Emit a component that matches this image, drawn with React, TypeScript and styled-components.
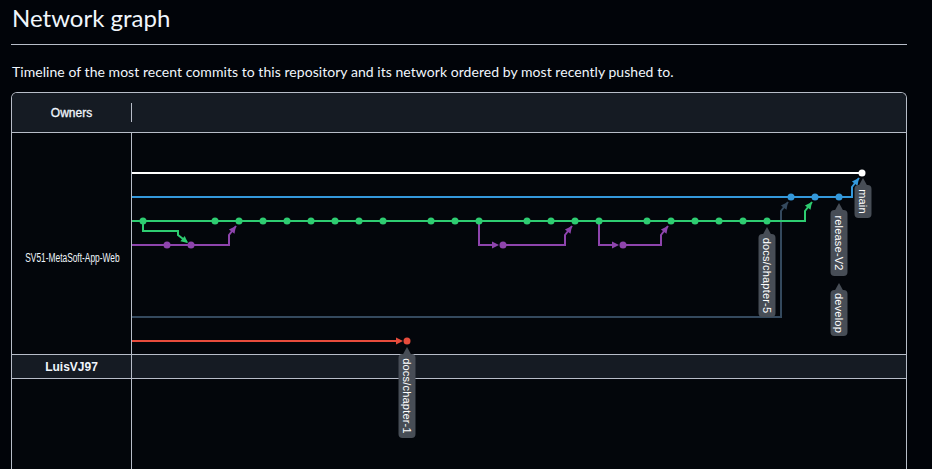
import styled, { createGlobalStyle } from "styled-components";

const GlobalStyle = createGlobalStyle`
  html, body {
    margin: 0;
    padding: 0;
    background: #010409;
    overflow: hidden;
  }
  body {
    font-family: Lato, "Noto Sans", "Liberation Sans", sans-serif;
    color: #f0f6fc;
  }
`;

const Page = styled.main`
  width: 896px;
  padding-left: 11px;
`;

const Title = styled.h2`
  margin: 0;
  padding: 0 0 8px 1px;
  font-size: 24px;
  font-weight: 400;
  line-height: 36px;
  border-bottom: 1px solid #b7bdc8;
`;

const Lead = styled.p`
  margin: 16px 0 10px 1px;
  font-size: 14px;
  line-height: 21px;
  letter-spacing: 0.05px;
`;

const Frame = styled.section`
  border: 1px solid #b7bdc8;
  border-bottom: none;
  border-radius: 6px 6px 0 0;
  overflow: hidden;
`;

const Header = styled.div`
  display: grid;
  grid-template-columns: 119px 1px 1fr;
  align-items: center;
  height: 39px;
  background: #151b23;
  border-bottom: 1px solid #b7bdc8;
`;

const HeadLabel = styled.div`
  text-align: center;
  font: 400 12px "Liberation Sans", Arial, sans-serif;
  -webkit-text-stroke: 0.3px #f0f6fc;
  color: #f0f6fc;
`;

const HeadDivider = styled.span`
  height: 19px;
  background: #b7bdc8;
`;

const Body = styled.div`
  position: relative;
  background: #03060b;
`;

const Row = styled.div<{ $h: number; $band?: boolean }>`
  display: grid;
  grid-template-columns: 120px 1fr;
  height: ${({ $h }) => $h}px;
  box-sizing: border-box;
  background: ${({ $band }) => ($band ? "#151b23" : "transparent")};
  border-top: ${({ $band }) => ($band ? "1px solid #b7bdc8" : "none")};
  border-bottom: ${({ $band }) => ($band ? "1px solid #b7bdc8" : "none")};
`;

const OwnerCell = styled.div<{ $offset?: number }>`
  display: flex;
  align-items: center;
  justify-content: center;
  box-sizing: border-box;
  padding-top: ${({ $offset }) => $offset ?? 0}px;
  border-right: 1px solid #b7bdc8;
`;

const RepoName = styled.span`
  display: inline-block;
  white-space: nowrap;
  font: 400 12.5px "Liberation Sans", Arial, sans-serif;
  color: #f0f6fc;
  transform: translateX(1px) scaleX(0.67);
`;

const OwnerName = styled.span`
  font: 700 12px "Liberation Sans", Arial, sans-serif;
  color: #f0f6fc;
`;

const Chart = styled.svg`
  position: absolute;
  left: 0;
  top: 0;
  width: 100%;
  height: 100%;
  pointer-events: none;
`;

const TagText = styled.text`
  font: 400 11px "Liberation Sans", Arial, sans-serif;
  letter-spacing: 0.2px;
  fill: #ffffff;
`;

const C = {
  white: "#ffffff",
  blue: "#3498db",
  green: "#2ecc71",
  purple: "#8e44ad",
  slate: "#34495e",
  red: "#e74c3c",
};

type Edge = { color: string; d: string; tip?: [number, number, number, number] };

// merge into a commit above: vertical at x-10, then diagonal into the dot
const mergeUp = (fromX: number, fromY: number, tx: number, ty: number) =>
  `M${fromX} ${fromY} H${tx - 10} V${ty + 14} L${tx - 3} ${ty + 5}`;

const edges: Edge[] = [
  { color: C.white, d: "M132 173 H862" },
  { color: C.slate, d: mergeUp(132, 317, 791, 197), tip: [788, 202, 7, -9] },
  { color: C.blue, d: mergeUp(132, 197, 862, 173), tip: [859, 178, 7, -9] },
  { color: C.green, d: mergeUp(132, 221, 815, 197), tip: [812, 202, 7, -9] },
  { color: C.green, d: "M143 221 V231 H178 V235 L187 242", tip: [188, 243, 10, 8] },
  { color: C.purple, d: mergeUp(132, 245, 239, 221), tip: [236, 226, 7, -9] },
  { color: C.purple, d: "M479 221 V245 H497", tip: [499, 245, 1, 0] },
  { color: C.purple, d: mergeUp(503, 245, 575, 221), tip: [572, 226, 7, -9] },
  { color: C.purple, d: "M599 221 V245 H617", tip: [619, 245, 1, 0] },
  { color: C.purple, d: mergeUp(623, 245, 671, 221), tip: [668, 226, 7, -9] },
  { color: C.red, d: "M132 341 H401", tip: [403, 341, 1, 0] },
];

const greenDots = [143, 215, 239, 263, 287, 311, 335, 359, 383, 431, 455, 479, 527, 551, 575, 599, 647, 671, 695, 719, 743, 767];

const dots: { x: number; y: number; color: string }[] = [
  ...greenDots.map((x) => ({ x, y: 221, color: C.green })),
  ...[167, 191, 503, 623].map((x) => ({ x, y: 245, color: C.purple })),
  ...[791, 815, 839].map((x) => ({ x, y: 197, color: C.blue })),
  { x: 862, y: 173, color: C.white },
  { x: 407, y: 341, color: C.red },
];

const tags = [
  { x: 863, tip: 178, h: 33, text: "main" },
  { x: 839, tip: 203, h: 66, text: "release-V2" },
  { x: 839, tip: 283, h: 46, text: "develop" },
  { x: 767, tip: 227, h: 83, text: "docs/chapter-5" },
  { x: 407, tip: 347, h: 84, text: "docs/chapter-1" },
];

function ArrowHead({ tip, color }: { tip: [number, number, number, number]; color: string }) {
  const [x, y, dx, dy] = tip;
  const len = Math.hypot(dx, dy);
  const ux = dx / len;
  const uy = dy / len;
  const bx = x - ux * 7;
  const by = y - uy * 7;
  const pts = `${x},${y} ${bx - uy * 3.5},${by + ux * 3.5} ${bx + uy * 3.5},${by - ux * 3.5}`;
  return <polygon points={pts} fill={color} />;
}

function Tag({ x, tip, h, text }: { x: number; tip: number; h: number; text: string }) {
  const top = tip + 7;
  return (
    <g>
      <polygon points={`${x},${tip} ${x - 5},${top + 2} ${x + 5},${top + 2}`} fill="#474d56" />
      <rect x={x - 8.5} y={top} width={17} height={h} rx={4} fill="#474d56" />
      <TagText
        transform={`translate(${x} ${top + h / 2}) rotate(90)`}
        textAnchor="middle"
        dominantBaseline="central"
      >
        {text}
      </TagText>
    </g>
  );
}

function NetworkChart() {
  return (
    <Chart>
      <g transform="translate(-12 -133)">
        {edges.map((e, i) => (
          <g key={i}>
            <path d={e.d} fill="none" stroke={e.color} strokeWidth={2} />
            {e.tip && <ArrowHead tip={e.tip} color={e.color} />}
          </g>
        ))}
        {dots.map((d, i) => (
          <circle key={i} cx={d.x} cy={d.y} r={3.5} fill={d.color} />
        ))}
        {tags.map((t) => (
          <Tag key={t.text} {...t} />
        ))}
      </g>
    </Chart>
  );
}

export default function App() {
  return (
    <>
      <GlobalStyle />
      <Page>
        <Title>Network graph</Title>
        <Lead>
          Timeline of the most recent commits to this repository and its network ordered by most recently pushed to.
        </Lead>
        <Frame>
          <Header>
            <HeadLabel>Owners</HeadLabel>
            <HeadDivider />
            <div />
          </Header>
          <Body>
            <Row $h={221}>
              <OwnerCell $offset={28}>
                <RepoName>SV51-MetaSoft-App-Web</RepoName>
              </OwnerCell>
              <div />
            </Row>
            <Row $h={25} $band>
              <OwnerCell>
                <OwnerName>LuisVJ97</OwnerName>
              </OwnerCell>
              <div />
            </Row>
            <Row $h={140}>
              <OwnerCell />
              <div />
            </Row>
            <NetworkChart />
          </Body>
        </Frame>
      </Page>
    </>
  );
}
